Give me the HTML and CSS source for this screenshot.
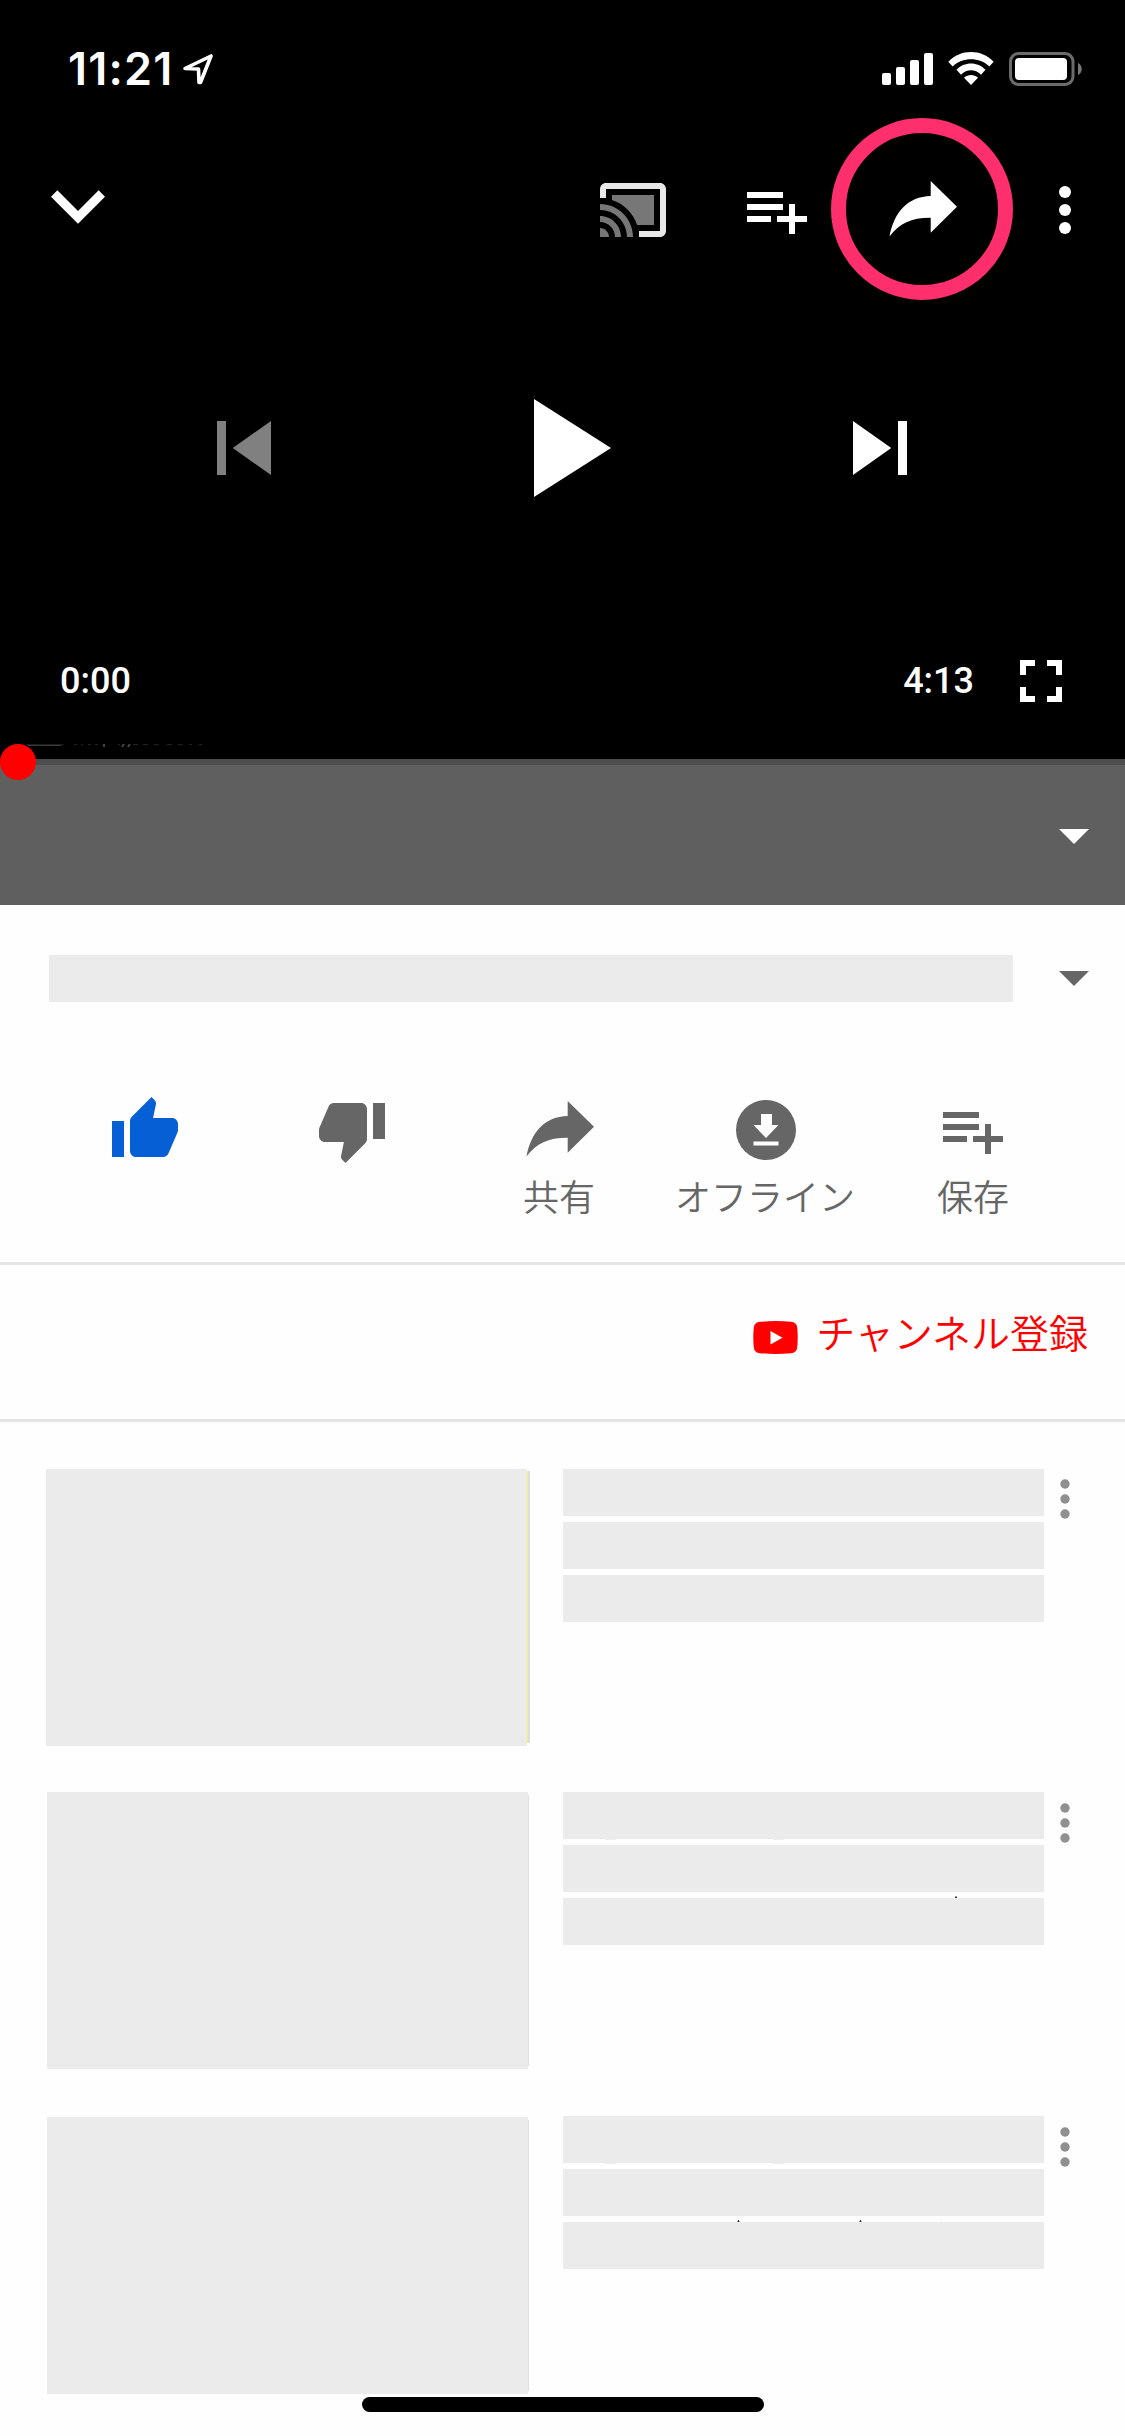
FILE: index.html
```html
<!DOCTYPE html>
<html lang="ja">
<head>
<meta charset="utf-8">
<title>動画プレーヤー</title>
<link rel="stylesheet" href="styles.css">
</head>
<body>
<svg class="defs" width="0" height="0">
  <symbol id="share" viewBox="0 0 72 72"><path d="M3.5 62.5C8 38 22 22.5 44.7 22V7L71 32.7 44.7 58.7V43.7C26 43.5 13.500 49 3.500 62.500z"/></symbol>
  <symbol id="playlist-add" viewBox="0 0 24 24"><path d="M14 10H2v2h12v-2zm0-4H2v2h12V6zm4 8v-4h-2v4h-4v2h4v4h2v-4h4v-2h-4zM2 16h8v-2H2v2z"/></symbol>
  <symbol id="drop" viewBox="0 0 24 24"><path d="M7 10l5 5 5-5z"/></symbol>
  <symbol id="more" viewBox="0 0 12 40"><circle cx="6" cy="5" r="4.7"/><circle cx="6" cy="20" r="4.7"/><circle cx="6" cy="35" r="4.7"/></symbol>
</svg>
<main class="screen">
  <section class="player">
    <div class="status">
      <span class="clock">11:21</span>
      <svg class="location" viewBox="0 0 30 31"><path d="M2 14.500L28 2 17.500 28.500 16 28.500 15.500 15z" /></svg>
      <svg class="signals" viewBox="0 0 202 36">
        <rect x="0" y="22" width="9" height="12" rx="2"/><rect x="14" y="16" width="9" height="18" rx="2"/><rect x="28" y="9" width="9" height="25" rx="2"/><rect x="42" y="2" width="9" height="32" rx="2"/>
        <path d="M66.300 10.800C78.500-2.200 99.500-2.200 111.700 10.800L107.300 15.400C97.500 5.700 80.500 5.700 70.700 15.400zM74.500 18.800C82 10.300 96 10.300 103.500 18.800L99 23.700C93 17.800 85 17.800 79 23.700zM82 26.800C86 23 92 23 96 26.800L89 34z"/>
        <rect class="cell" x="128.500" y="2.500" width="62.500" height="31" rx="8"/><rect x="133" y="7" width="52" height="22" rx="4"/><path class="nub" d="M196 12c5 2 5 10 0 12z"/>
      </svg>
    </div>
    <div class="toolbar">
      <svg class="chevron" viewBox="0 0 24 24"><path d="M7.410 7.840L12 12.420l4.590-4.580L18 9.250l-6 6-6-6z"/></svg>
      <svg class="icon cast" viewBox="0 0 24 24"><path class="cast-frame" d="M21 3H3c-1.100 0-2 .9-2 2v3h2V5h18v14h-7v2h7c1.100 0 2-.9 2-2V5c0-1.100-.9-2-2-2z"/><path class="cast-wave" d="M1 18v3h3c0-1.660-1.340-3-3-3zm0-4v2c2.760 0 5 2.240 5 5h2c0-3.870-3.130-7-7-7zm18-7H5v1.630c3.960 1.280 7.090 4.410 8.370 8.370H19V7zM1 10v2c4.970 0 9 4.030 9 9h2c0-6.080-4.930-11-11-11z"/></svg>
      <svg class="icon add"><use href="#playlist-add"/></svg>
      <span class="ring"><svg class="icon"><use href="#share"/></svg></span>
      <svg class="menu" viewBox="0 0 12 48"><circle cx="6" cy="6" r="6"/><circle cx="6" cy="24" r="6"/><circle cx="6" cy="42" r="6"/></svg>
    </div>
    <div class="transport">
      <svg class="skip dim" viewBox="0 0 24 24"><path d="M6 6h2v12H6zm3.500 6l8.500 6V6z"/></svg>
      <svg class="play" viewBox="0 0 24 24"><path d="M8 5v14l11-7z"/></svg>
      <svg class="skip" viewBox="0 0 24 24"><path d="M6 18l8.500-6L6 6v12zM16 6v12h2V6h-2z"/></svg>
    </div>
    <div class="times">
      <span>0:00</span><span class="total">4:13</span>
      <svg class="icon" viewBox="0 0 24 24"><path d="M7 14H5v5h5v-2H7v-3zm-2-4h2V7h3V5H5v5zm12 7h-3v2h5v-5h-2v3zM14 5v2h3v3h2V5h-5z"/></svg>
    </div>
    <svg class="caption" viewBox="0 0 230 4"><path class="caption-line" d="M26 0.500H64L60 2H28z"/><path class="caption-text" d="M74 .5h3m4 0h2m5 0h3m4 0h3m20 0h2m13 0h5m5 0h5m6 0h5m8 0h5m6 0h5m6 0h3m7 0h3"/><path class="caption-tail" d="M104 0v3M124 0l-2 3M130 0l-2 3"/></svg>
  </section>
  <section class="banner"><span class="knob"></span><svg class="icon"><use href="#drop"/></svg></section>
  <section class="title"><div class="block"></div><svg class="icon"><use href="#drop"/></svg></section>
  <nav class="actions">
    <div class="action liked"><svg class="icon" viewBox="0 0 24 24"><path d="M1 21h4V9H1v12zm22-11c0-1.100-.9-2-2-2h-6.310l.95-4.570.03-.32c0-.41-.17-.79-.44-1.060L14.170 1 7.590 7.590C7.220 7.950 7 8.450 7 9v10c0 1.100.9 2 2 2h9c.83 0 1.540-.5 1.840-1.220l3.020-7.050c.09-.23.14-.47.14-.73v-2z"/></svg></div>
    <div class="action"><svg class="icon" viewBox="0 0 24 24"><path d="M15 3H6c-.83 0-1.540.5-1.840 1.220l-3.020 7.050c-.09.23-.14.47-.14.73v2c0 1.100.9 2 2 2h6.310l-.95 4.570-.03.32c0 .41.17.79.44 1.060L9.830 23l6.590-6.590c.36-.36.58-.86.58-1.410V5c0-1.100-.9-2-2-2zm4 0v12h4V3h-4z"/></svg></div>
    <div class="action"><svg class="icon"><use href="#share"/></svg><span>共有</span></div>
    <div class="action"><svg class="icon" viewBox="0 0 72 72"><circle cx="36" cy="36" r="30"/><path class="cut" d="M31 20h11v11h6.500L36 44 23.500 31H31zM23.500 47.500h25v4h-25z"/></svg><span>オフライン</span></div>
    <div class="action"><svg class="icon"><use href="#playlist-add"/></svg><span>保存</span></div>
  </nav>
  <section class="channel">
    <svg class="logo" viewBox="0 0 45 33"><path d="M7 .8Q22.500-.6 38 .8 43.600 1.200 44.200 6.500 45.200 16.500 44.200 26.500 43.600 31.800 38 32.200 22.500 33.600 7 32.200 1.400 31.800.8 26.500-.2 16.500.8 6.500 1.400 1.200 7 .8z"/><path class="cut" d="M17.500 10v13.500l12-6.700z"/></svg>
    <span>チャンネル登録</span>
  </section>
  <section class="videos">
    <article class="video first"><div class="thumb"></div><div class="lines"><i></i><i></i><i></i></div><svg class="more"><use href="#more"/></svg></article>
    <article class="video second"><div class="thumb"></div><div class="lines"><i></i><i></i><i></i><svg class="specks" viewBox="0 0 481 106"><path class="faint" d="M42 47h11v1H42zM210 47h11v1h-11z"/><path d="M392 106v-1h.5v-1h1v1h.5v1z"/></svg></div><svg class="more"><use href="#more"/></svg></article>
    <article class="video third"><div class="thumb"></div><div class="lines"><i></i><i></i><i></i><svg class="specks" viewBox="0 0 481 106"><path class="faint" d="M42 47h11v1H42zM210 47h11v1h-11zM377 105h2v1h-2z"/><path d="M174.500 106v-1h.5v-1h1v1h.5v1zM296.500 106v-1h.5v-1h1v1h.5v1z"/></svg></div><svg class="more"><use href="#more"/></svg></article>
  </section>
  <div class="home"></div>
</main>
</body>
</html>
```
FILE: styles.css
```css
* { box-sizing: border-box; }
body { margin: 0; background: #fefefe; }
svg { display: block; fill: currentColor; flex: none; }
.defs { position: absolute; }
.screen { position: relative; width: 1125px; height: 2436px; overflow: hidden; background: #fefefe; color: #666; font-family: "Noto Sans CJK JP", sans-serif; }
.icon { width: 72px; height: 72px; }
.cut { fill: #fff; }

.player { height: 759px; background: #000; color: #fff; display: flex; flex-direction: column; }
.status { height: 118px; padding: 51px 43px 0 67px; display: flex; align-items: flex-start; }
.clock { width: 116px; padding-left: 1px; font: 600 45px/36px Inter, sans-serif; letter-spacing: 1.2px; white-space: nowrap; }
.location { width: 30px; height: 31px; margin-top: 3px; fill: none; stroke: #fff; stroke-width: 3.6; stroke-linejoin: round; }
.signals { width: 202px; height: 36px; margin-left: auto; margin-right: -2px; }
.cell { fill: none; stroke: #6b6b6b; stroke-width: 3; }
.nub { fill: #777; }

.toolbar { height: 183px; padding-left: 24px; display: flex; align-items: flex-start; }
.chevron { width: 108px; height: 108px; margin-top: 37px; }
.cast { margin: 56px 0 0 465px; }
.cast-frame { fill: #e8e8e8; }
.cast-wave { fill: #777; }
.add { margin: 56px 0 0 72px; }
.ring { width: 182px; height: 182px; margin-left: 18px; border: 15px solid #ff2f6e; border-radius: 50%; padding: 41px 0 0 40px; }
.menu { width: 12px; height: 48px; margin: 68px 0 0 46px; }

.transport { height: 294px; padding: 0 191px 0 190px; display: flex; justify-content: space-between; align-items: center; }
.skip { width: 108px; height: 108px; }
.play { width: 168px; height: 168px; }
.dim { color: #808080; }

.times { height: 149px; padding: 50px 48px 0 60px; display: flex; align-items: flex-start; font: 500 36px/72px Roboto, sans-serif; }
.total { margin-left: auto; margin-right: 31px; }
.caption { width: 230px; height: 4px; }
.caption-line { fill: #3a3a3a; }
.caption-text { stroke: #222; stroke-width: 1; }
.caption-tail { stroke: #444; stroke-width: 2; }

.banner { position: relative; height: 146px; background: #5f5f5f; border-top: 6px solid #4d4d4d; color: #fff; padding: 34px 15px 0; display: flex; justify-content: flex-end; }
.knob { position: absolute; left: 0; top: -21px; width: 36px; height: 36px; border-radius: 50%; background: red; }
.title { height: 189px; padding: 36px 15px 0 49px; display: flex; justify-content: space-between; align-items: flex-start; }
.title .block { width: 964px; height: 47px; margin-top: 14px; background: #ebebeb; }

.actions { height: 171px; padding: 0 49px 0 41.5px; display: grid; grid-template-columns: repeat(5, 207px); border-bottom: 3px solid #e5e5e5; }
.action { display: flex; flex-direction: column; align-items: center; font-weight: 350; font-size: 36px; line-height: 58px; white-space: nowrap; }
.action:nth-child(4) span { margin-right: 2px; }
.liked { color: #065fd4; }

.channel { height: 157px; padding: 0 37px 0 0; display: flex; justify-content: flex-end; align-items: flex-start; border-bottom: 3px solid #e5e5e5; color: red; font-weight: 350; font-size: 39px; line-height: 60px; }
.channel span { margin-top: 36px; }
.logo { width: 45px; height: 33px; margin: 56px 18px 0 0; }

.videos { padding-top: 47px; }
.video { height: 323px; display: flex; align-items: flex-start; padding-left: 47px; }
.second { height: 324px; }
.thumb { position: relative; width: 481px; height: 277px; margin-right: 35px; background: #ebebeb; }
.thumb::after { content: ""; position: absolute; left: 100%; top: 3px; width: 1px; height: 271px; background: #e0e0e0; }
.first { padding-left: 46px; }
.first .thumb { margin-right: 36px; }
.first .thumb::after { top: 2px; width: 2px; height: 272px; background: #dedede; border-left: 1px solid #edf57a; }
.third .thumb { margin-top: 1px; }
.lines { position: relative; width: 481px; display: flex; flex-direction: column; gap: 6px; }
.lines i { height: 47px; background: #ebebeb; }
.specks { position: absolute; left: 0; top: 0; width: 481px; height: 106px; color: #333; }
.faint { fill: #eee; }
.more { width: 12px; height: 40px; margin: 10px 0 0 15px; color: #909090; }
.second .more, .third .more { margin-top: 11px; }
.home { position: absolute; left: 362px; top: 2397px; width: 402px; height: 15px; border-radius: 8px; background: #000; }
```
